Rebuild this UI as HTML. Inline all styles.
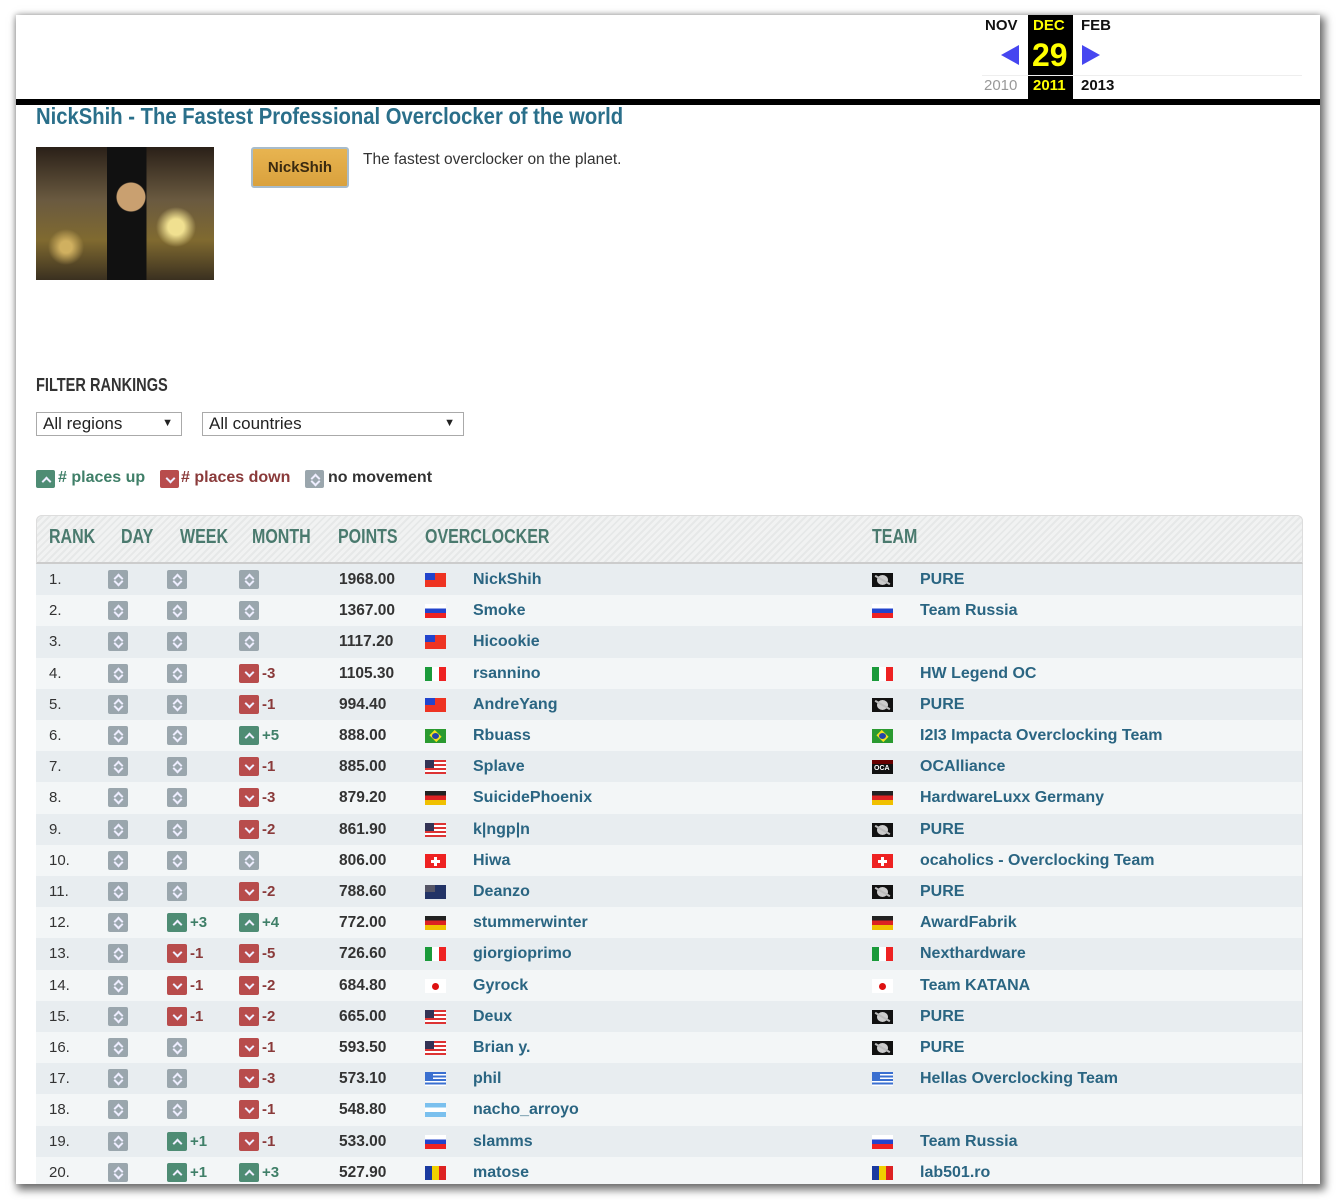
<!DOCTYPE html>
<html><head><meta charset="utf-8"><style>
*{margin:0;padding:0;box-sizing:border-box}
body{width:1336px;height:1200px;background:#fff;position:relative;overflow:hidden;font-family:"Liberation Sans",sans-serif}
#frame{position:absolute;left:16px;top:15px;width:1304px;height:1169px;background:#fff;box-shadow:3px 4px 8px 2px rgba(0,0,0,.55),-1px -1px 5px rgba(0,0,0,.15);overflow:hidden}
.abs{position:absolute}
.cond{font-family:"Liberation Sans Narrow","Liberation Sans",sans-serif;font-weight:bold;transform-origin:0 0}
.bar{left:0;top:84px;width:1304px;height:6px;background:#000}
.mon{font-weight:bold;font-size:15px;color:#111}
.tri{width:0;height:0;border-top:10px solid transparent;border-bottom:10px solid transparent}
.ic{position:absolute;width:20px;height:19px;border-radius:2px;top:6px}
.ic.n{background:#9aa6ad}
.ic.u{background:#4e8c74}
.ic.d{background:#b84c4c}
.ic.n:before,.ic.n:after,.ic.u:before,.ic.d:before{content:"";position:absolute;left:7px;width:5px;height:5px;border:solid #eef;border-width:2px 2px 0 0}
.ic.n:before{top:5px;transform:rotate(-45deg)}
.ic.n:after{top:8px;transform:rotate(135deg)}
.ic.u:before{top:8px;transform:rotate(-45deg)}
.ic.d:before{top:5px;transform:rotate(135deg)}
.mv{position:absolute;top:7px;font-size:15px;font-weight:bold}
.mv.u{color:#3f7f68}.mv.d{color:#8a3a3a}
.row{position:absolute;left:20px;width:1266px;height:31.2px;font-size:15px;color:#333}
.row.o{background:#e8edf0}.row.e{background:#f3f6f7}
.row>span.t{position:absolute;top:7px}
.row>span.p{font-size:15.5px}
.nm{color:#2a6582;font-weight:bold;font-size:16px}
.fl{position:absolute;top:9px;width:21px;height:14px}
.tw{background:#e32}
.tw:before{content:"";position:absolute;left:0;top:0;width:10px;height:7px;background:#2244cc}
.ru{background:linear-gradient(#fff 0 33%,#2244cc 33% 66%,#e22 66%)}
.it{background:linear-gradient(90deg,#1a9a3a 0 33%,#fff 33% 66%,#e22 66%)}
.br{background:#2a9a30}.br:before{content:"";position:absolute;left:4px;top:2px;width:13px;height:10px;background:#f3e020;transform:rotate(45deg) scale(.75,.75)}.br:after{content:"";position:absolute;left:7px;top:4px;width:7px;height:6px;border-radius:50%;background:#2244aa}
.us{background:repeating-linear-gradient(#d33 0 2px,#fff 2px 4px)}.us:before{content:"";position:absolute;left:0;top:0;width:9px;height:8px;background:#335}
.de{background:linear-gradient(#222 0 33%,#d22 33% 66%,#f0c000 66%)}
.ch{background:#e22}.ch:before{content:"";position:absolute;left:9px;top:3px;width:3px;height:9px;background:#fff}.ch:after{content:"";position:absolute;left:6px;top:6px;width:9px;height:3px;background:#fff}
.nz{background:#223366}.nz:before{content:"";position:absolute;left:0;top:0;width:10px;height:7px;background:#556}
.jp{background:#fff}.jp:before{content:"";position:absolute;left:7px;top:4px;width:7px;height:7px;border-radius:50%;background:#d11}
.gr{background:repeating-linear-gradient(#3a6fd0 0 2px,#fff 2px 3.5px)}.gr:before{content:"";position:absolute;left:0;top:0;width:8px;height:7px;background:#3a6fd0}
.ar{background:linear-gradient(#7ac0ee 0 33%,#fff 33% 66%,#7ac0ee 66%)}
.ro{background:linear-gradient(90deg,#1a3aa0 0 33%,#f0d000 33% 66%,#d22 66%)}
.pure{background:#111}.pure:before{content:"";position:absolute;left:5px;top:2px;width:11px;height:10px;border-radius:50%;background:#ccc}.pure:after{content:"";position:absolute;left:2px;top:6px;width:17px;height:2px;background:#bbb;transform:rotate(30deg)}
.oca{background:linear-gradient(#600 0 30%,#111 30%)}.oca:after{content:"OCA";position:absolute;left:2px;top:5px;font-size:7px;color:#fff;font-weight:bold}
.hd span{position:absolute;transform:scaleX(.8);transform-origin:0 0}
</style></head><body>
<div id="frame">
  <div class="abs" style="left:1012px;top:0;width:45px;height:84px;background:#000"></div>
  <div class="abs mon" style="left:969px;top:2px">NOV</div>
  <div class="abs mon" style="left:1017px;top:2px;color:#ff0">DEC</div>
  <div class="abs mon" style="left:1065px;top:2px">FEB</div>
  <div class="abs tri" style="left:985px;top:30px;border-right:18px solid #4646f0"></div>
  <div class="abs" style="left:1016px;top:22px;font-size:32px;font-weight:bold;color:#ff0">29</div>
  <div class="abs tri" style="left:1066px;top:30px;border-left:18px solid #4646f0"></div>
  <div class="abs" style="left:966px;top:60px;width:320px;height:1px;background:#eee"></div>
  <div class="abs" style="left:968px;top:62px;font-size:15px;color:#999">2010</div>
  <div class="abs" style="left:1017px;top:62px;font-size:15px;font-weight:bold;color:#ff0">2011</div>
  <div class="abs" style="left:1065px;top:62px;font-size:15px;font-weight:bold;color:#111">2013</div>
  <div class="abs bar"></div>

  <div class="abs cond" style="left:20px;top:88px;font-size:23px;color:#2a6f8a;transform:scaleX(.88);white-space:nowrap">NickShih - The Fastest Professional Overclocker of the world</div>
  <div class="abs" style="left:20px;top:132px;width:178px;height:133px;background:radial-gradient(circle at 95px 50px,#c9a070 0 14px,transparent 15px),linear-gradient(90deg,transparent 0 40%,#111 40% 62%,transparent 62%),radial-gradient(circle at 140px 80px,#f0e090 0 8px,transparent 20px),radial-gradient(circle at 30px 100px,#d0b060 0 6px,transparent 18px),linear-gradient(#2a2018,#6a5a40 40%,#806a30 70%,#3a3020)"></div>
  <div class="abs" style="left:235px;top:132px;width:98px;height:41px;border:2px solid #a8bccb;border-radius:3px;background:linear-gradient(#e8b450,#d9a13d);font-weight:bold;font-size:15px;color:#3a2a10;text-align:center;line-height:37px">NickShih</div>
  <div class="abs" style="left:347px;top:136px;font-size:15.5px;color:#333">The fastest overclocker on the planet.</div>

  <div class="abs cond" style="left:20px;top:360px;font-size:18px;color:#333;transform:scaleX(.81);white-space:nowrap">FILTER RANKINGS</div>
  <div class="abs" style="left:20px;top:397px;width:146px;height:24px;border:1px solid #aaa;font-size:17px;color:#222;padding:1px 6px">All regions<span style="position:absolute;right:8px;top:4px;font-size:11px">▼</span></div>
  <div class="abs" style="left:186px;top:397px;width:262px;height:24px;border:1px solid #aaa;font-size:17px;color:#222;padding:1px 6px">All countries<span style="position:absolute;right:8px;top:4px;font-size:11px">▼</span></div>

  <div class="abs" style="left:20px;top:454px;height:20px;width:500px;font-size:16px;font-weight:bold">
    <span class="ic u" style="left:0;top:1px;width:19px;height:18px"></span><span class="abs" style="left:22px;top:0;color:#3f7f68">#  places up</span>
    <span class="ic d" style="left:124px;top:1px;width:19px;height:18px"></span><span class="abs" style="left:145px;top:0;color:#8a3a3a">#  places down</span>
    <span class="ic n" style="left:269px;top:1px;width:19px;height:18px"></span><span class="abs" style="left:292px;top:0;color:#333">no movement</span>
  </div>

  <div class="abs" style="left:20px;top:500px;width:1267px;height:700px;border:1px solid #ddd;border-radius:6px 6px 0 0;background:#f3f6f7"></div>
  <div class="abs" style="left:20px;top:500px;width:1267px;height:49px;border:1px solid #ddd;border-bottom:2px solid #ccc;border-radius:6px 6px 0 0;background:repeating-linear-gradient(135deg,#f1f2f2 0 3px,#e6e8e8 3px 5px)"></div>
  <div class="abs cond hd" style="left:20px;top:511px;width:1267px;font-size:20px;color:#4a7a6e">
    <span style="left:13px">RANK</span><span style="left:85px">DAY</span><span style="left:144px">WEEK</span><span style="left:216px">MONTH</span><span style="left:302px">POINTS</span><span style="left:389px">OVERCLOCKER</span><span style="left:836px">TEAM</span>
  </div>

  <div class="abs" style="left:0;top:549px;width:1304px;height:640px">
<div class="row o" style="top:0px"><span class="t" style="left:13px">1.</span><span class="ic n" style="left:72px"></span><span class="ic n" style="left:131px"></span><span class="ic n" style="left:203px"></span><span class="t p" style="left:303px;font-weight:bold">1968.00</span><span class="fl tw" style="left:389px"></span><span class="t nm" style="left:437px">NickShih</span><span class="fl pure" style="left:836px"></span><span class="t nm" style="left:884px">PURE</span></div>
<div class="row e" style="top:31.2px"><span class="t" style="left:13px">2.</span><span class="ic n" style="left:72px"></span><span class="ic n" style="left:131px"></span><span class="ic n" style="left:203px"></span><span class="t p" style="left:303px;font-weight:bold">1367.00</span><span class="fl ru" style="left:389px"></span><span class="t nm" style="left:437px">Smoke</span><span class="fl ru" style="left:836px"></span><span class="t nm" style="left:884px">Team Russia</span></div>
<div class="row o" style="top:62.4px"><span class="t" style="left:13px">3.</span><span class="ic n" style="left:72px"></span><span class="ic n" style="left:131px"></span><span class="ic n" style="left:203px"></span><span class="t p" style="left:303px;font-weight:bold">1117.20</span><span class="fl tw" style="left:389px"></span><span class="t nm" style="left:437px">Hicookie</span></div>
<div class="row e" style="top:93.6px"><span class="t" style="left:13px">4.</span><span class="ic n" style="left:72px"></span><span class="ic n" style="left:131px"></span><span class="ic d" style="left:203px"></span><span class="mv d" style="left:226px">-3</span><span class="t p" style="left:303px;font-weight:bold">1105.30</span><span class="fl it" style="left:389px"></span><span class="t nm" style="left:437px">rsannino</span><span class="fl it" style="left:836px"></span><span class="t nm" style="left:884px">HW Legend OC</span></div>
<div class="row o" style="top:124.8px"><span class="t" style="left:13px">5.</span><span class="ic n" style="left:72px"></span><span class="ic n" style="left:131px"></span><span class="ic d" style="left:203px"></span><span class="mv d" style="left:226px">-1</span><span class="t p" style="left:303px;font-weight:bold">994.40</span><span class="fl tw" style="left:389px"></span><span class="t nm" style="left:437px">AndreYang</span><span class="fl pure" style="left:836px"></span><span class="t nm" style="left:884px">PURE</span></div>
<div class="row e" style="top:156px"><span class="t" style="left:13px">6.</span><span class="ic n" style="left:72px"></span><span class="ic n" style="left:131px"></span><span class="ic u" style="left:203px"></span><span class="mv u" style="left:226px">+5</span><span class="t p" style="left:303px;font-weight:bold">888.00</span><span class="fl br" style="left:389px"></span><span class="t nm" style="left:437px">Rbuass</span><span class="fl br" style="left:836px"></span><span class="t nm" style="left:884px">I2I3 Impacta Overclocking Team</span></div>
<div class="row o" style="top:187.2px"><span class="t" style="left:13px">7.</span><span class="ic n" style="left:72px"></span><span class="ic n" style="left:131px"></span><span class="ic d" style="left:203px"></span><span class="mv d" style="left:226px">-1</span><span class="t p" style="left:303px;font-weight:bold">885.00</span><span class="fl us" style="left:389px"></span><span class="t nm" style="left:437px">Splave</span><span class="fl oca" style="left:836px"></span><span class="t nm" style="left:884px">OCAlliance</span></div>
<div class="row e" style="top:218.4px"><span class="t" style="left:13px">8.</span><span class="ic n" style="left:72px"></span><span class="ic n" style="left:131px"></span><span class="ic d" style="left:203px"></span><span class="mv d" style="left:226px">-3</span><span class="t p" style="left:303px;font-weight:bold">879.20</span><span class="fl de" style="left:389px"></span><span class="t nm" style="left:437px">SuicidePhoenix</span><span class="fl de" style="left:836px"></span><span class="t nm" style="left:884px">HardwareLuxx Germany</span></div>
<div class="row o" style="top:249.6px"><span class="t" style="left:13px">9.</span><span class="ic n" style="left:72px"></span><span class="ic n" style="left:131px"></span><span class="ic d" style="left:203px"></span><span class="mv d" style="left:226px">-2</span><span class="t p" style="left:303px;font-weight:bold">861.90</span><span class="fl us" style="left:389px"></span><span class="t nm" style="left:437px">k|ngp|n</span><span class="fl pure" style="left:836px"></span><span class="t nm" style="left:884px">PURE</span></div>
<div class="row e" style="top:280.8px"><span class="t" style="left:13px">10.</span><span class="ic n" style="left:72px"></span><span class="ic n" style="left:131px"></span><span class="ic n" style="left:203px"></span><span class="t p" style="left:303px;font-weight:bold">806.00</span><span class="fl ch" style="left:389px"></span><span class="t nm" style="left:437px">Hiwa</span><span class="fl ch" style="left:836px"></span><span class="t nm" style="left:884px">ocaholics - Overclocking Team</span></div>
<div class="row o" style="top:312px"><span class="t" style="left:13px">11.</span><span class="ic n" style="left:72px"></span><span class="ic n" style="left:131px"></span><span class="ic d" style="left:203px"></span><span class="mv d" style="left:226px">-2</span><span class="t p" style="left:303px;font-weight:bold">788.60</span><span class="fl nz" style="left:389px"></span><span class="t nm" style="left:437px">Deanzo</span><span class="fl pure" style="left:836px"></span><span class="t nm" style="left:884px">PURE</span></div>
<div class="row e" style="top:343.2px"><span class="t" style="left:13px">12.</span><span class="ic n" style="left:72px"></span><span class="ic u" style="left:131px"></span><span class="mv u" style="left:154px">+3</span><span class="ic u" style="left:203px"></span><span class="mv u" style="left:226px">+4</span><span class="t p" style="left:303px;font-weight:bold">772.00</span><span class="fl de" style="left:389px"></span><span class="t nm" style="left:437px">stummerwinter</span><span class="fl de" style="left:836px"></span><span class="t nm" style="left:884px">AwardFabrik</span></div>
<div class="row o" style="top:374.4px"><span class="t" style="left:13px">13.</span><span class="ic n" style="left:72px"></span><span class="ic d" style="left:131px"></span><span class="mv d" style="left:154px">-1</span><span class="ic d" style="left:203px"></span><span class="mv d" style="left:226px">-5</span><span class="t p" style="left:303px;font-weight:bold">726.60</span><span class="fl it" style="left:389px"></span><span class="t nm" style="left:437px">giorgioprimo</span><span class="fl it" style="left:836px"></span><span class="t nm" style="left:884px">Nexthardware</span></div>
<div class="row e" style="top:405.6px"><span class="t" style="left:13px">14.</span><span class="ic n" style="left:72px"></span><span class="ic d" style="left:131px"></span><span class="mv d" style="left:154px">-1</span><span class="ic d" style="left:203px"></span><span class="mv d" style="left:226px">-2</span><span class="t p" style="left:303px;font-weight:bold">684.80</span><span class="fl jp" style="left:389px"></span><span class="t nm" style="left:437px">Gyrock</span><span class="fl jp" style="left:836px"></span><span class="t nm" style="left:884px">Team KATANA</span></div>
<div class="row o" style="top:436.8px"><span class="t" style="left:13px">15.</span><span class="ic n" style="left:72px"></span><span class="ic d" style="left:131px"></span><span class="mv d" style="left:154px">-1</span><span class="ic d" style="left:203px"></span><span class="mv d" style="left:226px">-2</span><span class="t p" style="left:303px;font-weight:bold">665.00</span><span class="fl us" style="left:389px"></span><span class="t nm" style="left:437px">Deux</span><span class="fl pure" style="left:836px"></span><span class="t nm" style="left:884px">PURE</span></div>
<div class="row e" style="top:468px"><span class="t" style="left:13px">16.</span><span class="ic n" style="left:72px"></span><span class="ic n" style="left:131px"></span><span class="ic d" style="left:203px"></span><span class="mv d" style="left:226px">-1</span><span class="t p" style="left:303px;font-weight:bold">593.50</span><span class="fl us" style="left:389px"></span><span class="t nm" style="left:437px">Brian y.</span><span class="fl pure" style="left:836px"></span><span class="t nm" style="left:884px">PURE</span></div>
<div class="row o" style="top:499.2px"><span class="t" style="left:13px">17.</span><span class="ic n" style="left:72px"></span><span class="ic n" style="left:131px"></span><span class="ic d" style="left:203px"></span><span class="mv d" style="left:226px">-3</span><span class="t p" style="left:303px;font-weight:bold">573.10</span><span class="fl gr" style="left:389px"></span><span class="t nm" style="left:437px">phil</span><span class="fl gr" style="left:836px"></span><span class="t nm" style="left:884px">Hellas Overclocking Team</span></div>
<div class="row e" style="top:530.4px"><span class="t" style="left:13px">18.</span><span class="ic n" style="left:72px"></span><span class="ic n" style="left:131px"></span><span class="ic d" style="left:203px"></span><span class="mv d" style="left:226px">-1</span><span class="t p" style="left:303px;font-weight:bold">548.80</span><span class="fl ar" style="left:389px"></span><span class="t nm" style="left:437px">nacho_arroyo</span></div>
<div class="row o" style="top:561.6px"><span class="t" style="left:13px">19.</span><span class="ic n" style="left:72px"></span><span class="ic u" style="left:131px"></span><span class="mv u" style="left:154px">+1</span><span class="ic d" style="left:203px"></span><span class="mv d" style="left:226px">-1</span><span class="t p" style="left:303px;font-weight:bold">533.00</span><span class="fl ru" style="left:389px"></span><span class="t nm" style="left:437px">slamms</span><span class="fl ru" style="left:836px"></span><span class="t nm" style="left:884px">Team Russia</span></div>
<div class="row e" style="top:592.8px"><span class="t" style="left:13px">20.</span><span class="ic n" style="left:72px"></span><span class="ic u" style="left:131px"></span><span class="mv u" style="left:154px">+1</span><span class="ic u" style="left:203px"></span><span class="mv u" style="left:226px">+3</span><span class="t p" style="left:303px;font-weight:bold">527.90</span><span class="fl ro" style="left:389px"></span><span class="t nm" style="left:437px">matose</span><span class="fl ro" style="left:836px"></span><span class="t nm" style="left:884px">lab501.ro</span></div>
  </div>
</div>
</body></html>
